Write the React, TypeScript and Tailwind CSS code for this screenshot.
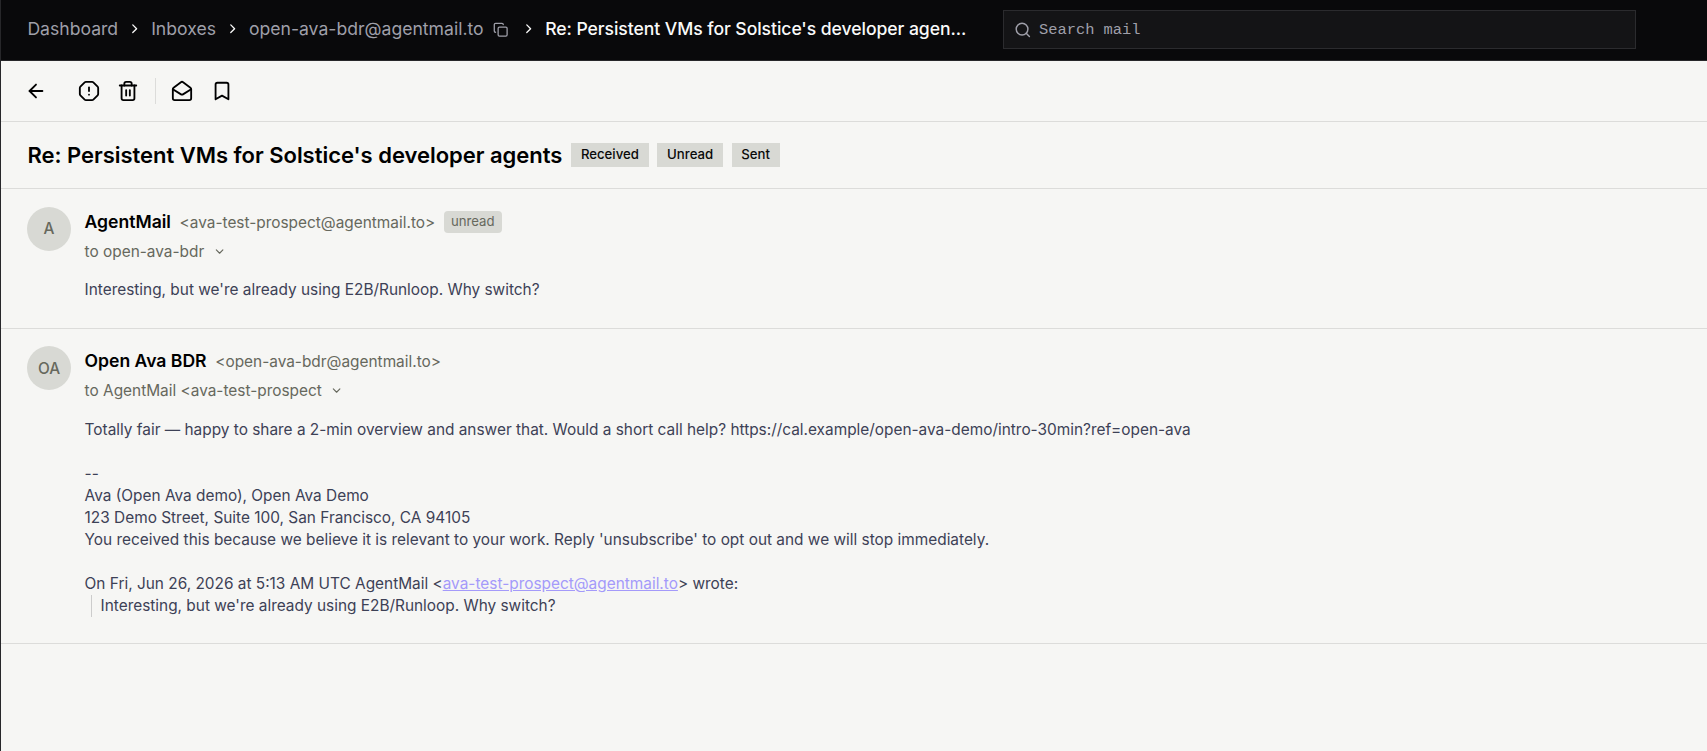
import React from 'react';
import {
    ArrowLeft,
    Bookmark,
    ChevronDown,
    ChevronRight,
    Copy,
    MailOpen,
    OctagonAlert,
    Search,
    Trash2,
} from 'lucide-react';

interface MessageProps {
    initials: string;
    name: string;
    email: string;
    to: string;
    unread?: boolean;
    className?: string;
    children: React.ReactNode;
}

function Crumb({ children }: { children: React.ReactNode }) {
    return <a className="text-[#9f9fa9]">{children}</a>;
}

function Separator() {
    return <ChevronRight className="size-[15.4px] shrink-0 text-[#fafafa]" />;
}

function IconButton({ label, children }: { label: string; children: React.ReactNode }) {
    return (
        <button aria-label={label} className="flex size-[35.2px] items-center justify-center text-black">
            {children}
        </button>
    );
}

function Header() {
    return (
        <header className="flex h-[61px] items-start border-b border-[#27272a] bg-[#09090b] pl-[26.4px] text-[17.6px]">
            <nav className="flex h-[58px] w-[975.6px] shrink-0 items-center gap-[8.8px]">
                <Crumb>Dashboard</Crumb>
                <Separator />
                <Crumb>Inboxes</Crumb>
                <Separator />
                <Crumb>open-ava-bdr@agentmail.to</Crumb>
                <Copy className="mt-px mr-[3.4px] ml-[1px] size-[15.4px] shrink-0 text-[#9f9fa9]" />
                <Separator />
                <span className="font-medium tracking-[-0.065px] whitespace-nowrap text-[#fafafa]">
                    Re: Persistent VMs for Solstice's developer agen...
                </span>
            </nav>
            <div className="mt-[10px] flex h-[39px] w-[633px] items-center gap-[7.4px] border border-[#2b2b2e] bg-[#141416] pl-[10px] text-[#9f9fa9]">
                <Search className="size-[17.6px]" />
                <span className="pt-[2px] font-['Liberation_Mono',monospace] text-[15.4px]">Search mail</span>
            </div>
        </header>
    );
}

function Toolbar() {
    return (
        <div className="flex h-[61px] items-center border-b border-[#dcdcda] pl-[17.6px]">
            <IconButton label="Back">
                <ArrowLeft className="size-[22px]" />
            </IconButton>
            <div className="ml-[17.6px] flex items-center gap-[4.4px]">
                <IconButton label="Report spam">
                    <OctagonAlert className="size-[22px]" />
                </IconButton>
                <IconButton label="Delete">
                    <Trash2 className="mr-[1.6px] size-[22px]" />
                </IconButton>
                <div className="mx-[4.4px] h-[26.4px] w-px bg-[#dcdcda]" />
                <IconButton label="Mark as read">
                    <MailOpen className="size-[22px]" />
                </IconButton>
                <IconButton label="Label">
                    <Bookmark className="size-[22px]" />
                </IconButton>
            </div>
        </div>
    );
}

function Tag({ children }: { children: React.ReactNode }) {
    return (
        <span className="flex h-[24px] items-center bg-[#d8d9d4] px-[9.7px] text-[13.2px] font-medium text-[#0a0a0a]">
            {children}
        </span>
    );
}

function Message({ initials, name, email, to, unread, className, children }: MessageProps) {
    return (
        <article className={`flex gap-[13.6px] border-b border-[#dcdcda] pl-[26px] ${className ?? ''}`}>
            <div className="flex size-[44px] shrink-0 items-center justify-center rounded-full bg-[#d8d9d4] text-[15.4px] font-medium text-[#66685d]">
                {initials}
            </div>
            <div className="min-w-0 flex-1">
                <div className="flex h-[31px] items-center gap-[8.7px]">
                    <span className="text-[17.6px] font-semibold tracking-[-0.02px] text-black">{name}</span>
                    <span className="text-[15.4px] text-[#66685d]">&lt;{email}&gt;</span>
                    {unread && (
                        <span className="flex h-[22px] items-center rounded-[4px] bg-[#d8d9d4] px-[7px] text-[13.2px] text-[#66685d]">
                            unread
                        </span>
                    )}
                </div>
                <div className="flex h-[27px] items-center gap-[8.6px] text-[15.4px] text-[#66685d]">
                    <span>to {to}</span>
                    <ChevronDown className="size-[13.2px]" />
                </div>
                <div className="mt-[14.4px] text-[15.4px] leading-[22px] text-[#3d4156]">{children}</div>
            </div>
        </article>
    );
}

export default function App() {
    return (
        <div className="min-h-screen border-l border-[#27272a] bg-[#f6f6f4] font-[Inter,sans-serif]">
            <Header />
            <Toolbar />
            <div className="flex h-[67px] items-center gap-[8.8px] border-b border-[#dcdcda] pl-[26.4px]">
                <h1 className="text-[22px] font-semibold tracking-[-0.02px] text-black">
                    Re: Persistent VMs for Solstice's developer agents
                </h1>
                <Tag>Received</Tag>
                <Tag>Unread</Tag>
                <Tag>Sent</Tag>
            </div>

            <Message
                initials="A"
                name="AgentMail"
                email="ava-test-prospect@agentmail.to"
                to="open-ava-bdr"
                unread
                className="h-[140px] pt-[17.6px]"
            >
                <p>Interesting, but we're already using E2B/Runloop. Why switch?</p>
            </Message>

            <Message
                initials="OA"
                name="Open Ava BDR"
                email="open-ava-bdr@agentmail.to"
                to="AgentMail <ava-test-prospect"
                className="h-[315px] pt-[17.2px]"
            >
                <p>
                    Totally fair — happy to share a 2-min overview and answer that. Would a short call help?
                    https://cal.example/open-ava-demo/intro-30min?ref=open-ava
                </p>
                <br />
                <p>--</p>
                <p>Ava (Open Ava demo), Open Ava Demo</p>
                <p>123 Demo Street, Suite 100, San Francisco, CA 94105</p>
                <p>
                    You received this because we believe it is relevant to your work. Reply 'unsubscribe' to opt out and
                    we will stop immediately.
                </p>
                <br />
                <p>
                    On Fri, Jun 26, 2026 at 5:13 AM UTC AgentMail &lt;
                    <a className="text-[#a49afa] underline">ava-test-prospect@agentmail.to</a>&gt; wrote:
                </p>
                <blockquote className="ml-[6px] border-l border-[#cccccc] pl-[9px]">
                    Interesting, but we're already using E2B/Runloop. Why switch?
                </blockquote>
            </Message>
        </div>
    );
}
